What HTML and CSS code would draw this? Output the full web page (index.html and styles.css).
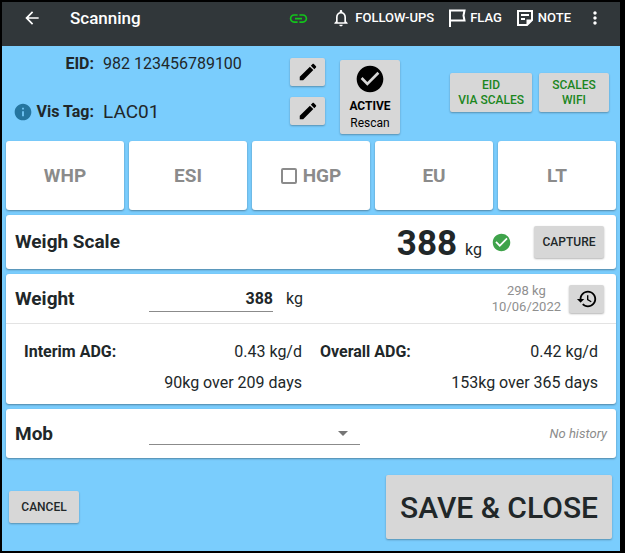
FILE: index.html
```html
<!DOCTYPE html>
<html lang="en">
  <head>
    <meta charset="UTF-8" />
    <meta name="viewport" content="width=device-width, initial-scale=1.0" />
    <title>Scanning</title>
    <link rel="stylesheet" href="styles.css">
  </head>
  <body>
    <header class="toolbar">
      <button type="button" class="tool" aria-label="Back">
        <svg width="20" height="20" viewBox="0 0 24 24"><path d="M20 11H7.83l5.59-5.59L12 4l-8 8 8 8 1.41-1.41L7.83 13H20v-2z" /></svg>
      </button>
      <h1>Scanning</h1>
      <svg class="link-icon" width="21" height="21" viewBox="0 0 24 24"><path d="M3.9 12c0-1.71 1.39-3.1 3.1-3.1h4V7H7c-2.76 0-5 2.24-5 5s2.24 5 5 5h4v-1.9H7c-1.71 0-3.1-1.39-3.1-3.1zM8 13h8v-2H8v2zm9-6h-4v1.9h4c1.71 0 3.1 1.39 3.1 3.1s-1.39 3.1-3.1 3.1h-4V17h4c2.76 0 5-2.24 5-5s-2.24-5-5-5z" /></svg>
      <button type="button" class="tool">
        <svg width="20" height="20" viewBox="0 0 24 24"><path d="M12 22c1.1 0 2-.9 2-2h-4c0 1.1.9 2 2 2zm6-6v-5c0-3.07-1.63-5.64-4.5-6.32V4c0-.83-.67-1.5-1.5-1.5s-1.5.67-1.5 1.5v.68C7.64 5.36 6 7.92 6 11v5l-2 2v1h16v-1l-2-2zm-2 1H8v-6c0-2.48 1.51-4.5 4-4.5s4 2.02 4 4.5v6z" /></svg>
        FOLLOW-UPS
      </button>
      <button type="button" class="tool">
        <svg width="18" height="18" viewBox="0 0 18 18"><path class="line" d="M2 0.500V18M2 1.500H16.500L15.500 6.500L16.500 11.500H2" /></svg>
        FLAG
      </button>
      <button type="button" class="tool">
        <svg width="18" height="18" viewBox="0 0 18 18"><path class="line" d="M2 2H16V11L11 16H2ZM5 6H13M5 10H9" /><path d="M10.500 10.500H16.500L10.500 16.500Z" /></svg>
        NOTE
      </button>
      <button type="button" class="tool" aria-label="More">
        <svg width="20" height="20" viewBox="0 0 24 24"><path d="M12 8c1.100 0 2-.9 2-2s-.9-2-2-2-2 .9-2 2 .9 2 2 2zm0 2c-1.100 0-2 .9-2 2s.9 2 2 2 2-.9 2-2-.9-2-2-2zm0 6c-1.100 0-2 .9-2 2s.9 2 2 2 2-.9 2-2-.9-2-2-2z" /></svg>
      </button>
    </header>

    <main>
      <section class="animal">
        <dl class="tags">
          <dt>EID:</dt>
          <dd>982 123456789100</dd>
          <dt>
            <svg class="info-icon" width="20" height="20" viewBox="0 0 24 24"><path d="M12 2C6.480 2 2 6.480 2 12s4.480 10 10 10 10-4.480 10-10S17.520 2 12 2zm1 15h-2v-6h2v6zm0-8h-2V7h2v2z" /></svg>
            Vis Tag:
          </dt>
          <dd class="vis-tag">LAC01</dd>
        </dl>
        <div class="edits">
          <button type="button" class="btn icon-btn" aria-label="Edit EID">
            <svg width="22" height="22" viewBox="0 0 24 24"><path d="M3 17.250V21h3.750L17.810 9.940l-3.750-3.750L3 17.250zM20.710 7.040c.39-.39.39-1.020 0-1.410l-2.340-2.340c-.39-.39-1.020-.39-1.410 0l-1.830 1.830 3.750 3.750 1.830-1.830z" /></svg>
          </button>
          <button type="button" class="btn icon-btn" aria-label="Edit Vis Tag">
            <svg width="22" height="22" viewBox="0 0 24 24"><path d="M3 17.250V21h3.750L17.810 9.940l-3.750-3.750L3 17.250zM20.710 7.040c.39-.39.39-1.020 0-1.410l-2.340-2.340c-.39-.39-1.020-.39-1.410 0l-1.830 1.830 3.750 3.750 1.830-1.830z" /></svg>
          </button>
        </div>
        <button type="button" class="btn active-btn">
          <svg width="32" height="32" viewBox="0 0 24 24"><path d="M12 2C6.480 2 2 6.480 2 12s4.480 10 10 10 10-4.480 10-10S17.520 2 12 2zm-2 15l-5-5 1.410-1.410L10 14.170l7.590-7.590L19 8l-9 9z" /></svg>
          <strong>ACTIVE</strong>
          <span>Rescan</span>
        </button>
        <div class="scales">
          <button type="button" class="btn scale-btn">EID<br />VIA SCALES</button>
          <button type="button" class="btn scale-btn">SCALES<br />WIFI</button>
        </div>
      </section>

      <section class="statuses">
        <div class="card status">WHP</div>
        <div class="card status">ESI</div>
        <label class="card status"><input type="checkbox" name="hgp" />HGP</label>
        <div class="card status">EU</div>
        <div class="card status">LT</div>
      </section>

      <section class="card row weigh-scale">
        <h2>Weigh Scale</h2>
        <p class="reading"><strong>388</strong> <span>kg</span></p>
        <svg class="ok-icon" width="21" height="21" viewBox="0 0 24 24"><path d="M12 2C6.480 2 2 6.480 2 12s4.480 10 10 10 10-4.480 10-10S17.520 2 12 2zm-2 15l-5-5 1.410-1.410L10 14.170l7.590-7.590L19 8l-9 9z" /></svg>
        <button type="button" class="btn text-btn">CAPTURE</button>
      </section>

      <section class="card">
        <div class="row">
          <h2><label for="weight">Weight</label></h2>
          <input type="text" id="weight" name="weight" value="388" />
          <span class="unit">kg</span>
          <p class="previous">298 kg<br />10/06/2022</p>
          <button type="button" class="btn icon-btn" aria-label="Weight history">
            <svg width="22" height="22" viewBox="0 0 24 24"><path d="M13 3c-4.970 0-9 4.030-9 9H1l3.890 3.890.07.14L9 12H6c0-3.870 3.130-7 7-7s7 3.130 7 7-3.130 7-7 7c-1.930 0-3.680-.79-4.940-2.060l-1.420 1.420C8.270 19.990 10.510 21 13 21c4.970 0 9-4.030 9-9s-4.030-9-9-9zm-1 5v5l4.280 2.540.72-1.210-3.500-2.080V8H12z" /></svg>
          </button>
        </div>
        <div class="gains">
          <dl class="gain">
            <dt>Interim ADG:</dt>
            <dd>0.43 kg/d</dd>
            <dd class="period">90kg over 209 days</dd>
          </dl>
          <dl class="gain">
            <dt>Overall ADG:</dt>
            <dd>0.42 kg/d</dd>
            <dd class="period">153kg over 365 days</dd>
          </dl>
        </div>
      </section>

      <section class="card row mob">
        <h2><label for="mob">Mob</label></h2>
        <div class="select">
          <select id="mob" name="mob">
            <option value=""></option>
          </select>
          <svg width="10" height="5" viewBox="0 0 10 5"><path d="M0 0h10L5 5z" /></svg>
        </div>
        <em class="history">No history</em>
      </section>
    </main>

    <footer class="actions">
      <button type="button" class="btn text-btn">CANCEL</button>
      <button type="submit" class="btn save-btn">SAVE &amp; CLOSE</button>
    </footer>
  </body>
</html>
```
FILE: styles.css
```css
* {
  box-sizing: border-box;
}

body {
  display: flex;
  flex-direction: column;
  min-height: 100vh;
  margin: 0;
  border: solid #000;
  border-width: 2px 5px 2px 2px;
  background-color: #7acdfd;
  color: #212729;
  font-family: Roboto, sans-serif;
  font-size: 16px;
  line-height: 20px;
}

h1,
h2,
p,
dl,
dd {
  margin: 0;
}

button,
input,
select {
  font: inherit;
  color: inherit;
}

svg {
  flex: none;
  fill: currentColor;
}

.line {
  fill: none;
  stroke: currentColor;
  stroke-width: 2;
}

/* Toolbar */
.toolbar {
  display: flex;
  align-items: center;
  gap: 14px;
  padding: 0 15px 12px 20px;
  height: 44px;
  background-color: #31373a;
  color: #fff;
}

.toolbar h1 {
  flex: 1;
  margin-left: 14px;
  font-size: 17px;
  font-weight: 500;
}

.tool {
  display: flex;
  align-items: center;
  gap: 4px;
  padding: 0;
  border: none;
  background: none;
  font-size: 13px;
  font-weight: 500;
  cursor: pointer;
}

.link-icon {
  margin-right: 8px;
  color: #12c41b;
}

/* Buttons */
.btn {
  padding: 0;
  border: none;
  border-radius: 2px;
  background-color: #d7d7d7;
  box-shadow: 0 1px 2px rgba(0, 0, 0, 0.3);
  cursor: pointer;
}

.icon-btn {
  display: flex;
  align-items: center;
  justify-content: center;
  width: 35px;
  height: 28px;
  color: #000;
}

.text-btn {
  height: 32px;
  padding: 0 8px;
  min-width: 70px;
  font-size: 12px;
  font-weight: 500;
}

.save-btn {
  height: 64px;
  padding: 2px 14px 0;
  font-size: 30px;
  font-weight: 500;
}

/* Animal details */
main {
  padding: 0 4px;
}

.animal {
  display: flex;
  align-items: flex-start;
  height: 95px;
  padding: 12px 7px 0 0;
}

.tags {
  display: grid;
  grid-template-columns: 88px 178px;
  grid-auto-rows: 20px;
  gap: 28px 9px;
  margin-top: -4px;
}

.tags dt {
  display: flex;
  align-items: center;
  justify-content: flex-end;
  gap: 4px;
  font-weight: 700;
  white-space: nowrap;
}

.info-icon {
  color: #25759f;
}

.vis-tag {
  font-size: 19px;
}

.edits {
  display: grid;
  gap: 11px;
  margin: 0 15px 0 9px;
}

.active-btn {
  display: flex;
  flex-direction: column;
  align-items: center;
  width: 60px;
  height: 74px;
  margin-top: 2px;
  padding-top: 3px;
  color: #000;
  font-size: 12px;
  line-height: 17px;
}

.active-btn svg {
  margin-bottom: 3px;
}

.scales {
  display: flex;
  gap: 7px;
  margin: 15px 0 0 auto;
}

.scale-btn {
  height: 39px;
  padding: 0 8px;
  min-width: 70px;
  color: #1b861e;
  font-size: 12px;
  font-weight: 500;
  line-height: 15px;
}

/* Cards */
.card {
  margin-bottom: 5px;
  border-radius: 3px;
  background-color: #fff;
  box-shadow: 0 1px 2px rgba(0, 0, 0, 0.35);
}

.statuses {
  display: grid;
  grid-template-columns: repeat(5, 1fr);
  gap: 5px;
}

.status {
  display: flex;
  align-items: center;
  justify-content: center;
  gap: 6px;
  height: 69px;
  color: #8b8b8b;
  font-size: 19px;
  font-weight: 700;
}

.status input {
  appearance: none;
  width: 16px;
  height: 16px;
  margin: 0;
  border: 2px solid #8b8b8b;
  border-radius: 2px;
}

.row {
  display: flex;
  align-items: center;
  height: 49px;
  padding: 0 12px 0 9px;
}

.row h2 {
  width: 134px;
  font-size: 19px;
  font-weight: 700;
}

.weigh-scale {
  height: 54px;
}

.reading {
  margin-left: auto;
  padding-top: 4px;
}

.reading strong {
  margin-right: 4px;
  font-size: 35px;
  line-height: 40px;
}

.ok-icon {
  margin: 0 22px 0 9px;
  color: #3fa34b;
}

#weight {
  width: 124px;
  height: 26px;
  padding: 0;
  border: none;
  border-bottom: 1px solid #8b8b8b;
  font-weight: 700;
  text-align: right;
}

.unit {
  margin-left: 13px;
}

.previous {
  margin-left: auto;
  margin-right: 8px;
  color: #8f8f8f;
  font-size: 13px;
  line-height: 16px;
  text-align: center;
}

.gains {
  display: flex;
  gap: 18px;
  padding: 12px 18px 6px;
  border-top: 1px solid #e3e3e3;
}

.gain {
  display: grid;
  grid-template-columns: auto auto;
  flex: 1;
  line-height: 31px;
}

.gain dt {
  font-weight: 700;
}

.gain dd {
  text-align: right;
}

.gain .period {
  grid-column: 1 / -1;
}

.mob {
  padding-right: 9px;
}

.select {
  display: grid;
  align-items: center;
  width: 211px;
  border-bottom: 1px solid #8b8b8b;
}

.select select,
.select svg {
  grid-area: 1 / 1;
}

.select select {
  appearance: none;
  height: 22px;
  border: none;
  background: none;
}

.select svg {
  justify-self: end;
  margin-right: 12px;
  color: #757575;
  pointer-events: none;
}

.history {
  margin-left: auto;
  color: #8b8b8b;
  font-size: 13px;
}

/* Bottom actions */
.actions {
  display: flex;
  align-items: center;
  justify-content: space-between;
  margin-top: auto;
  padding: 11px 8px 12px 7px;
}
```
